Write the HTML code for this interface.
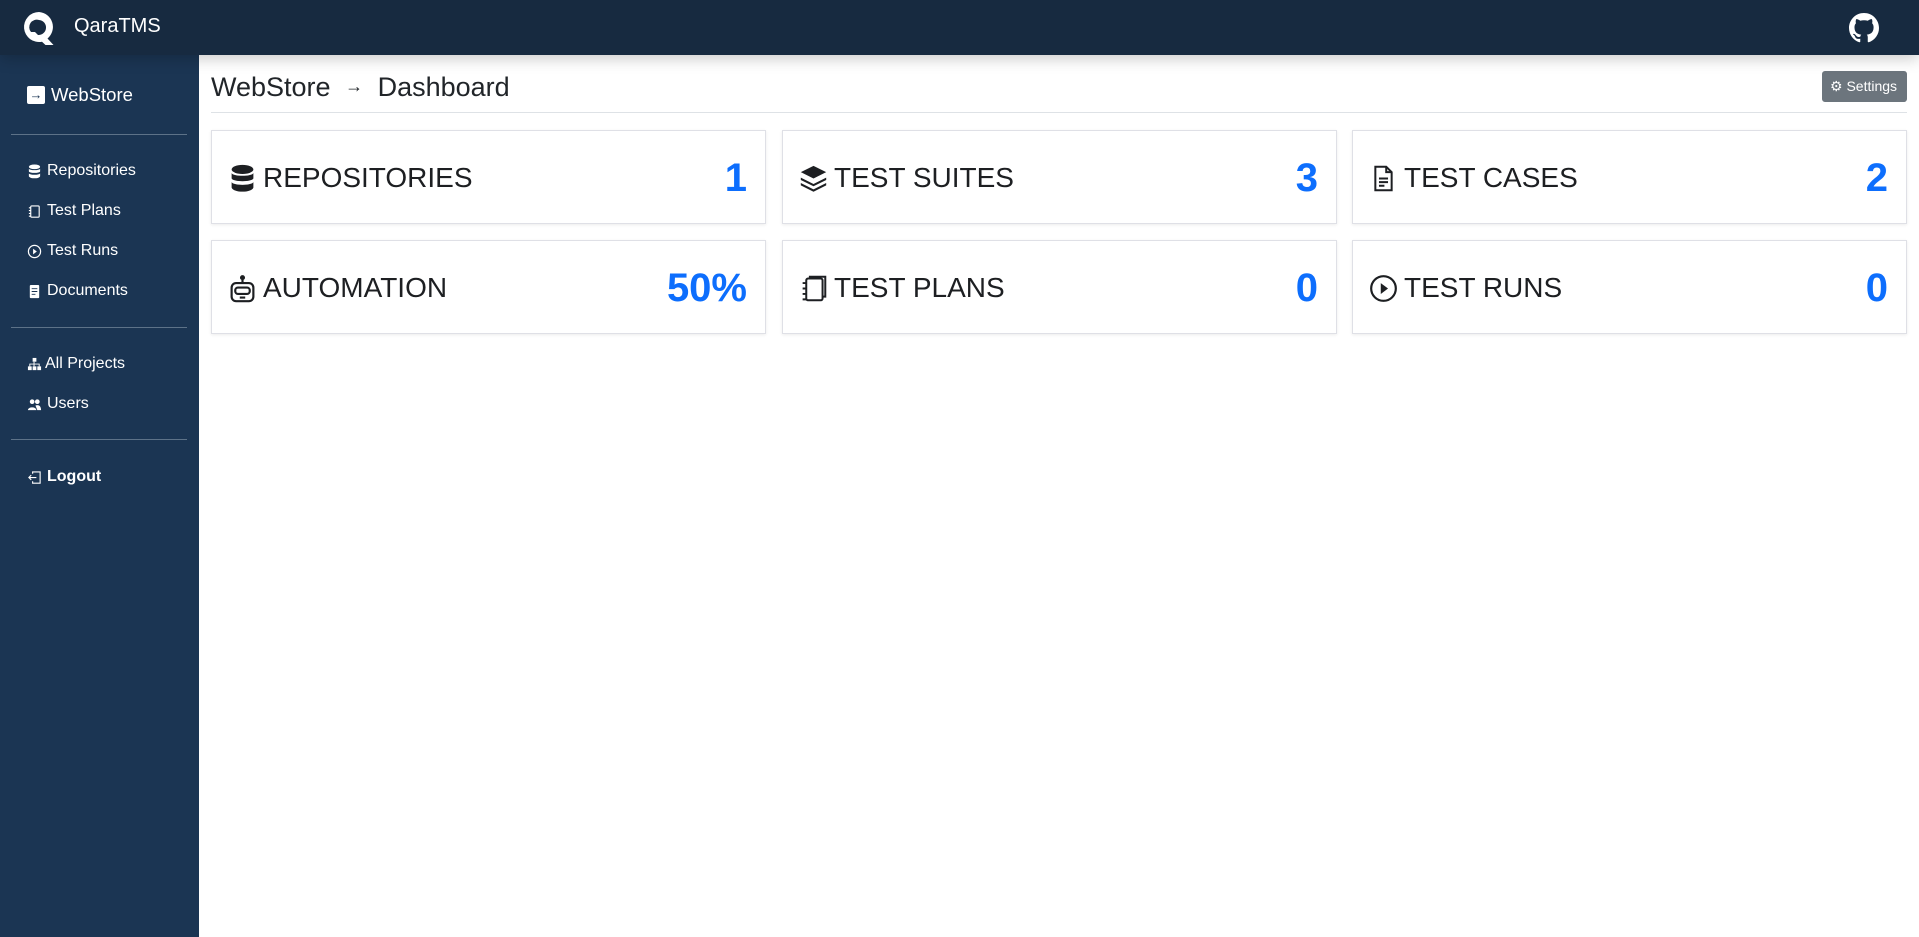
<!DOCTYPE html>
<html><head><meta charset="utf-8"><style>
*{box-sizing:border-box;margin:0;padding:0}
body{width:1919px;height:937px;overflow:hidden;font-family:"Liberation Sans",sans-serif;background:#fff;position:relative;color:#212529}
.hdr{position:absolute;left:0;top:0;width:1919px;height:55px;background:#172a40;box-shadow:0 4px 14px rgba(0,0,0,.2);z-index:2}
.side{position:absolute;left:0;top:55px;width:199px;height:882px;background:#1b3553;color:#fff}
.si{position:absolute;left:27px;font-size:16px;display:flex;align-items:center;gap:5px}
.si svg{width:15px;height:15px}
.hr{position:absolute;left:11px;width:176px;height:1px;background:#5d7288}
.card{position:absolute;width:555px;height:94px;border:1px solid #dfe0e6;box-shadow:0 1px 3px rgba(0,0,0,.08);background:#fff}
.card .lab{position:absolute;left:16px;top:31px;font-size:28px;display:flex;align-items:center;gap:6px;color:#1d1f22}
.card .lab svg{width:29px;height:29px}
.card .num{position:absolute;right:18px;top:25px;font-size:40px;font-weight:bold;color:#0d6efd}
</style></head><body>
<div class="hdr">
<svg style="position:absolute;left:22px;top:10px" width="35" height="35" viewBox="0 0 35 35"><path d="M17 2a15 15 0 1 0 3 29.7l3.5 3.3h8l-6-6.5A15 15 0 0 0 17 2zm0 8a7.5 7.5 0 1 1-1 15l-3 -3h-4a7.5 7.5 0 0 1 8-12z" fill="#fff" fill-rule="evenodd"/></svg>
<div style="position:absolute;left:74px;top:15px;color:#fff;font-size:20px">QaraTMS</div>
<svg style="position:absolute;left:1849px;top:13px" width="30" height="30" viewBox="0 0 16 16"><path fill="#fff" d="M8 0C3.580 0 0 3.580 0 8c0 3.540 2.290 6.530 5.470 7.590.4.070.55-.17.55-.38 0-.19-.01-.82-.01-1.490-2.010.37-2.530-.49-2.690-.94-.09-.23-.48-.94-.82-1.130-.28-.15-.68-.52-.01-.53.63-.01 1.080.58 1.230.82.72 1.210 1.870.87 2.330.66.07-.52.28-.87.51-1.070-1.780-.2-3.640-.89-3.640-3.950 0-.87.31-1.590.82-2.150-.08-.2-.36-1.020.08-2.120 0 0 .67-.21 2.200.82.64-.18 1.320-.27 2-.27.68 0 1.360.09 2 .27 1.530-1.040 2.200-.82 2.200-.82.44 1.100.16 1.920.08 2.120.51.56.82 1.270.82 2.150 0 3.070-1.870 3.750-3.650 3.950.29.25.54.73.54 1.480 0 1.070-.01 1.930-.01 2.200 0 .21.15.46.55.38A8.013 8.013 0 0 0 16 8c0-4.420-3.580-8-8-8z"/></svg>
</div>
<div class="side">
<div class="si" style="top:29px;left:27px;font-size:18.5px;gap:6px"><span style="display:inline-block;width:18px;height:18px;background:#fff;border-radius:2px;color:#1b3553;font-size:13px;text-align:center;line-height:18px">→</span>WebStore</div>
<div class="hr" style="top:79px"></div>
<div class="si" style="top:107px"><svg viewBox="0 0 16 16" fill="#fff"><ellipse cx="8" cy="3" rx="6" ry="2.5"/><path d="M2 5c1 2 11 2 12 0v3c-1 2-11 2-12 0zM2 10c1 2 11 2 12 0v3c-1 3-11 3-12 0z"/></svg>Repositories</div>
<div class="si" style="top:147px"><svg viewBox="0 0 16 16" fill="none" stroke="#fff" stroke-width="1.2"><rect x="4" y="2" width="9" height="12" rx="1"/><path d="M2 4h2M2 7h2M2 10h2M2 13h2"/></svg>Test Plans</div>
<div class="si" style="top:187px"><svg viewBox="0 0 16 16"><circle cx="8" cy="8" r="6.5" fill="none" stroke="#fff" stroke-width="1.3"/><path d="M6.5 5v6l4-3z" fill="#fff"/></svg>Test Runs</div>
<div class="si" style="top:227px"><svg viewBox="0 0 16 16"><rect x="3" y="1" width="10" height="14" rx="1" fill="#fff"/><path d="M5 5h6M5 8h6M5 11h4" stroke="#1b3553"/></svg>Documents</div>
<div class="hr" style="top:272px"></div>
<div class="si" style="top:300px;gap:3px"><svg viewBox="0 0 16 16" fill="#fff"><rect x="6" y="1" width="4" height="4"/><rect x="1" y="10" width="4" height="4"/><rect x="6" y="10" width="4" height="4"/><rect x="11" y="10" width="4" height="4"/><path d="M7.5 5v5M3 10V7.5h10V10" stroke="#fff" fill="none"/></svg>All Projects</div>
<div class="si" style="top:340px"><svg viewBox="0 0 16 16" fill="#fff"><circle cx="5.5" cy="5" r="2.5"/><circle cx="11" cy="5" r="2.5"/><path d="M1 14c0-4 9-4 9 0zM9 9c3-1 6 0 6 5h-4z"/></svg>Users</div>
<div class="hr" style="top:384px"></div>
<div class="si" style="top:413px;font-weight:bold"><svg viewBox="0 0 16 16" fill="none" stroke="#fff" stroke-width="1.2"><path d="M6 4V2h8v12H6v-2M10 8H2M4.5 5.5L2 8l2.5 2.5"/></svg>Logout</div>
</div>
<div style="position:absolute;left:211px;top:72px;font-size:27px;color:#212529">WebStore <span style="font-size:18px;position:relative;top:-4px;margin:0 7px">→</span> Dashboard</div>
<div style="position:absolute;left:1822px;top:71px;width:85px;height:31px;background:#6c757d;border-radius:3px;color:#fff;font-size:14px;line-height:31px;padding-left:8px">⚙ Settings</div>
<div style="position:absolute;left:211px;top:112px;width:1696px;height:1px;background:#dee2e6"></div>

<div class="card" style="left:211px;top:130px"><div class="lab"><svg viewBox="0 0 16 16" fill="#1d1f22"><ellipse cx="8" cy="3" rx="6" ry="2.5"/><path d="M2 5c1 2 11 2 12 0v3c-1 2-11 2-12 0zM2 10c1 2 11 2 12 0v3c-1 3-11 3-12 0z"/></svg>REPOSITORIES</div><div class="num">1</div></div>
<div class="card" style="left:782px;top:130px"><div class="lab"><svg viewBox="0 0 16 16" fill="#1d1f22"><path d="M8 1l7 3.5L8 8 1 4.5z"/><path d="M1 7.5L8 11l7-3.5 0 1.3L8 12.3 1 8.8zM1 10.5L8 14l7-3.5v1.3L8 15.3 1 11.8z"/></svg>TEST SUITES</div><div class="num">3</div></div>
<div class="card" style="left:1352px;top:130px"><div class="lab"><svg viewBox="0 0 16 16" fill="none" stroke="#1d1f22" stroke-width="1.1"><path d="M3.5 1.5h6l3 3v10h-9z"/><path d="M9.5 1.5v3h3M5.5 8h5M5.5 10h5M5.5 12h3"/></svg>TEST CASES</div><div class="num">2</div></div>
<div class="card" style="left:211px;top:240px"><div class="lab"><svg viewBox="0 0 16 16" fill="none" stroke="#1d1f22" stroke-width="1.2"><rect x="2" y="5" width="12" height="10" rx="2.5"/><rect x="4" y="7.5" width="8" height="3.5" rx="1.5"/><path d="M8 5V2.5M6.5 13h3"/><circle cx="8" cy="2" r=".8" fill="#1d1f22"/></svg>AUTOMATION</div><div class="num">50%</div></div>
<div class="card" style="left:782px;top:240px"><div class="lab"><svg viewBox="0 0 16 16" fill="none" stroke="#1d1f22" stroke-width="1.1"><rect x="4" y="2.5" width="9" height="12" rx="1"/><path d="M6 2.5V1.5h8.5v11h-1.5M2 5h2M2 8h2M2 11h2M2 14h2"/></svg>TEST PLANS</div><div class="num">0</div></div>
<div class="card" style="left:1352px;top:240px"><div class="lab"><svg viewBox="0 0 16 16"><circle cx="8" cy="8" r="6.8" fill="none" stroke="#1d1f22" stroke-width="1.2"/><path d="M6.5 5v6l4-3z" fill="#1d1f22"/></svg>TEST RUNS</div><div class="num">0</div></div>
</body></html>
